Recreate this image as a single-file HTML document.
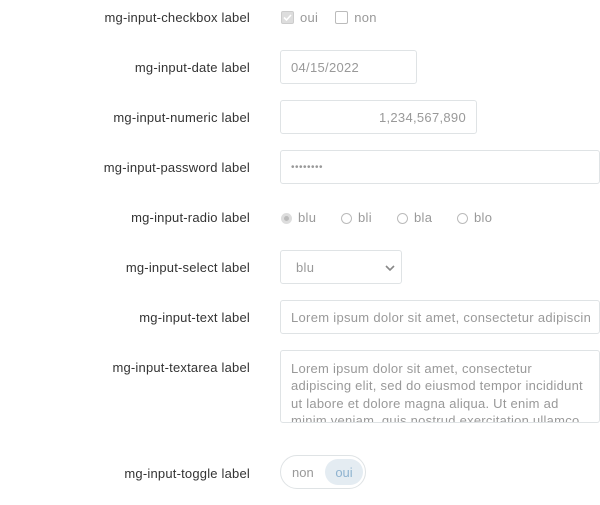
<!DOCTYPE html>
<html><head><style>
body{margin:0;width:600px;height:505px;background:#fff;font-family:"Liberation Sans",sans-serif;font-size:13px;overflow:hidden;position:relative}
.l{position:absolute;right:350px;color:#333;white-space:nowrap;letter-spacing:0.2px;margin-top:1px}
.b{position:absolute;left:280px;border:1px solid #dfe3e5;border-radius:3px;box-sizing:border-box;color:#999;height:34px;line-height:33px;padding:0 10px;white-space:nowrap;overflow:hidden;letter-spacing:0.3px}
.g{position:absolute;color:#999;white-space:nowrap;margin-top:1px;letter-spacing:0.3px}
.cb{display:inline-block;width:11px;height:11px;border:1px solid #bbb;border-radius:2px;vertical-align:-2px;margin-right:6px;background:#fff}
.rd{display:inline-block;width:11px;height:11px;border:1px solid #bbb;border-radius:50%;vertical-align:-2px;margin-right:6px;box-sizing:border-box}
</style></head><body>
<div class="l" style="top:9px">mg-input-checkbox label</div>
<div class="g" style="left:281px;top:9px"><span class="cb" style="background:#ddd;border-color:#ccc;position:relative"><svg width="11" height="11" style="position:absolute;left:0;top:0"><path d="M2 5.5l2.5 2.5 4.5-5" stroke="#fff" stroke-width="1.6" fill="none"/></svg></span>oui<span style="display:inline-block;width:17px"></span><span class="cb"></span>non</div>

<div class="l" style="top:59px">mg-input-date label</div>
<div class="b" style="top:50px;width:137px">04/15/2022</div>

<div class="l" style="top:109px">mg-input-numeric label</div>
<div class="b" style="top:100px;width:197px;text-align:right">1,234,567,890</div>

<div class="l" style="top:159px">mg-input-password label</div>
<div class="b" style="top:150px;width:320px;font-size:10px;letter-spacing:0.5px">••••••••</div>

<div class="l" style="top:209px">mg-input-radio label</div>
<div class="g" style="left:281px;top:209px"><span class="rd" style="border:3px solid #ddd;background:#bbb"></span>blu</div>
<div class="g" style="left:341px;top:209px"><span class="rd"></span>bli</div>
<div class="g" style="left:397px;top:209px"><span class="rd"></span>bla</div>
<div class="g" style="left:457px;top:209px"><span class="rd"></span>blo</div>

<div class="l" style="top:259px">mg-input-select label</div>
<div class="b" style="top:250px;width:122px;padding-left:15px">blu<svg width="10" height="8" style="position:absolute;right:6px;top:13px"><path d="M1 2l4 4 4-4" stroke="#888" stroke-width="1.6" fill="none"/></svg></div>

<div class="l" style="top:309px">mg-input-text label</div>
<div class="b" style="top:300px;width:320px"><div style="width:299px;overflow:hidden">Lorem ipsum dolor sit amet, consectetur adipiscing</div></div>

<div class="l" style="top:359px">mg-input-textarea label</div>
<div class="b" style="top:350px;width:320px;height:73px;line-height:17.3px;padding:9px 6px 0 10px;white-space:normal;letter-spacing:0.25px">Lorem ipsum dolor sit amet, consectetur adipiscing elit, sed do eiusmod tempor incididunt ut labore et dolore magna aliqua. Ut enim ad minim veniam, quis nostrud exercitation ullamco</div>

<div class="l" style="top:465px">mg-input-toggle label</div>
<div style="position:absolute;left:280px;top:455px;width:86px;height:34px;box-sizing:border-box;border:1px solid #dfe3e5;border-radius:17px">
<span style="position:absolute;left:11px;top:9px;color:#999">non</span>
<span style="position:absolute;left:44px;top:3px;width:38px;height:26px;border-radius:13px;background:#e4ecf2;color:#8fb3d0;text-align:center;line-height:27px">oui</span>
</div>
</body></html>
